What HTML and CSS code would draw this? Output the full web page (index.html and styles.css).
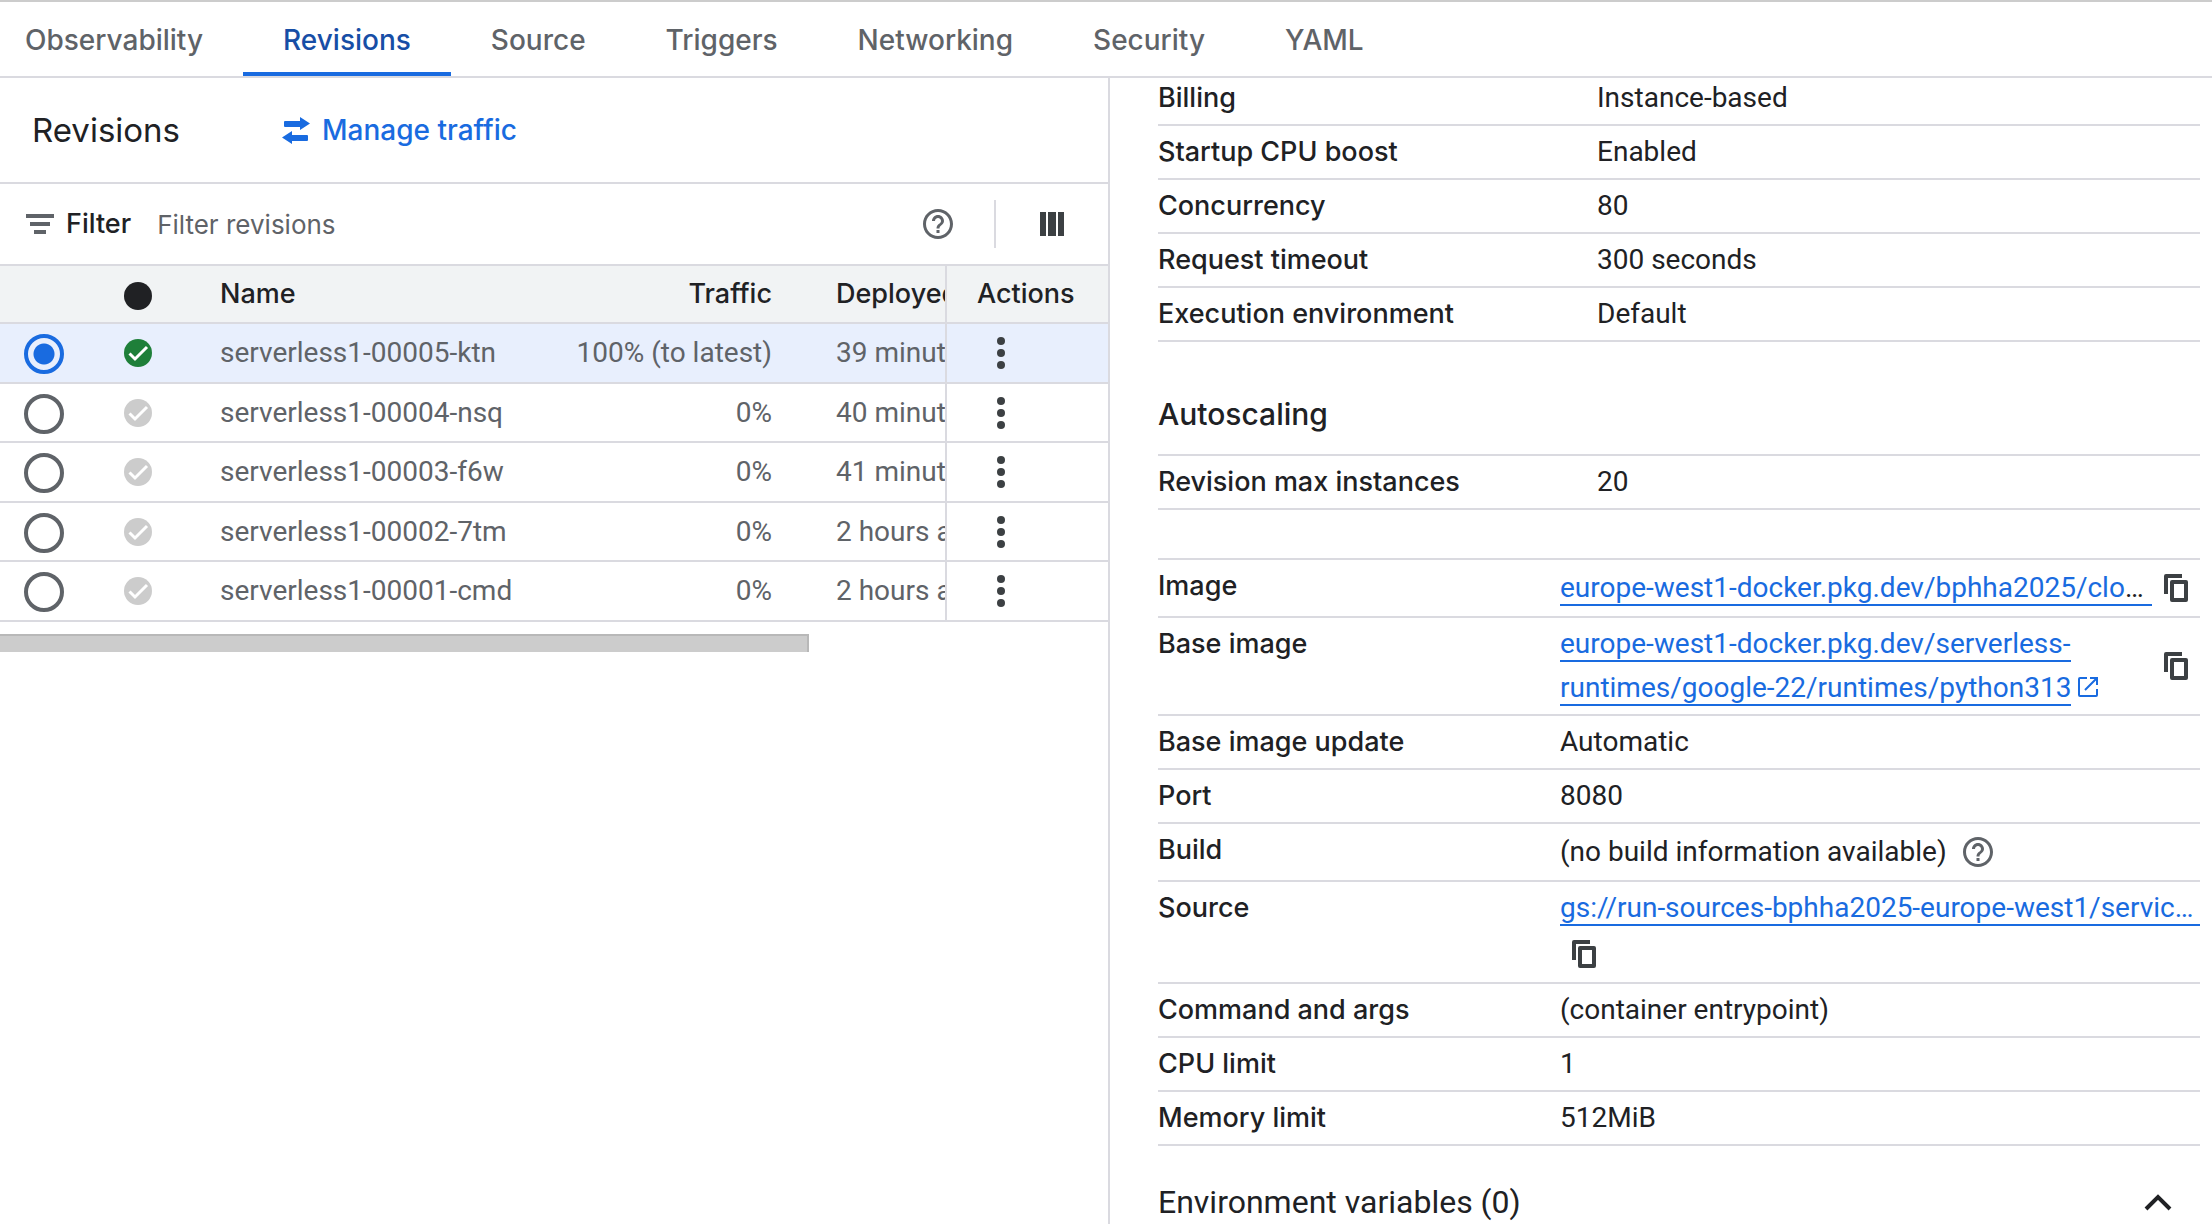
FILE: index.html
```
<!DOCTYPE html>
<html lang="en">
<head>
<meta charset="utf-8">
<title>Revisions</title>
<link rel="stylesheet" href="styles.css">
</head>
<body>
<svg class="sprite" aria-hidden="true">
  <symbol id="i-check" viewBox="0 0 28 28"><circle cx="14" cy="14" r="14" fill="currentColor"/><path class="tick" d="M5.5 14.5l5.5 5.5L23 8"/></symbol>
  <symbol id="i-more" viewBox="0 0 8 32"><circle cx="4" cy="4" r="4"/><circle cx="4" cy="16" r="4"/><circle cx="4" cy="28" r="4"/></symbol>
  <symbol id="i-help" viewBox="2 2 20 20"><path d="M11 18h2v-2h-2v2zm1-16C6.48 2 2 6.48 2 12s4.48 10 10 10 10-4.480 10-10S17.520 2 12 2zm0 18c-4.410 0-8-3.590-8-8s3.590-8 8-8 8 3.590 8 8-3.590 8-8 8zm0-14c-2.210 0-4 1.790-4 4h2c0-1.100.9-2 2-2s2 .9 2 2c0 2-3 1.750-3 5h2c0-2.250 3-2.500 3-5 0-2.210-1.790-4-4-4z"/></symbol>
  <symbol id="i-copy" viewBox="0 0 24 28"><path d="M2 0h16v4H4v16H0V2a2 2 0 0 1 2-2z"/><path fill-rule="evenodd" d="M8 6h14a2 2 0 0 1 2 2v18a2 2 0 0 1-2 2H8a2 2 0 0 1-2-2V8a2 2 0 0 1 2-2zm2 4v14h10V10z"/></symbol>
</svg>

<nav class="tabs">
  <a href="#observability">Observability</a>
  <a href="#revisions" class="active" aria-current="page">Revisions</a>
  <a href="#source">Source</a>
  <a href="#triggers">Triggers</a>
  <a href="#networking">Networking</a>
  <a href="#security">Security</a>
  <a href="#yaml">YAML</a>
</nav>

<main class="split">
  <section class="list">
    <header class="list-head">
      <h1>Revisions</h1>
      <button type="button" class="manage">
        <svg width="28" height="27" viewBox="0 0 28 27"><path d="M3 4h15V0l10 6.500L18 13v-3H3a1 1 0 0 1-1-1V5a1 1 0 0 1 1-1zM25 24H10v3L0 20.500 10 14v4h15a1 1 0 0 1 1 1v4a1 1 0 0 1-1 1z" fill="currentColor"/></svg>
        Manage traffic
      </button>
    </header>
    <div class="filter">
      <svg width="28" height="20" viewBox="0 0 28 20"><path d="M0 0h28v4H0zM4 8h20v4H4zM8 16h12v4H8z"/></svg>
      <label for="filter">Filter</label>
      <input id="filter" type="text" placeholder="Filter revisions">
      <button type="button" class="icon help" aria-label="Help"><svg width="30" height="30"><use href="#i-help"/></svg></button>
      <button type="button" class="icon columns" aria-label="Column display options"><svg width="24" height="24" viewBox="0 0 24 24"><path d="M0 0h6v24H0zM8 0h8v24H8zM18 0h6v24h-6z"/></svg></button>
    </div>
    <table class="revisions">
      <colgroup><col class="c-radio"><col class="c-status"><col class="c-name"><col class="c-traffic"><col><col class="c-actions"></colgroup>
      <thead>
        <tr><th></th><th><span class="dot"></span></th><th>Name</th><th class="num">Traffic</th><th class="deployed">Deployed</th><th class="actions">Actions</th></tr>
      </thead>
      <tbody>
        <tr class="selected">
          <td><input type="radio" name="rev" aria-label="serverless1-00005-ktn" checked></td>
          <td><svg class="ok" width="28" height="28"><use href="#i-check"/></svg></td>
          <td>serverless1-00005-ktn</td><td class="num">100% (to latest)</td><td class="deployed">39 minutes ago</td>
          <td class="actions"><button type="button" class="icon more" aria-label="Actions"><svg width="8" height="32"><use href="#i-more"/></svg></button></td>
        </tr>
        <tr>
          <td><input type="radio" name="rev" aria-label="serverless1-00004-nsq"></td>
          <td><svg class="idle" width="28" height="28"><use href="#i-check"/></svg></td>
          <td>serverless1-00004-nsq</td><td class="num">0%</td><td class="deployed">40 minutes ago</td>
          <td class="actions"><button type="button" class="icon more" aria-label="Actions"><svg width="8" height="32"><use href="#i-more"/></svg></button></td>
        </tr>
        <tr>
          <td><input type="radio" name="rev" aria-label="serverless1-00003-f6w"></td>
          <td><svg class="idle" width="28" height="28"><use href="#i-check"/></svg></td>
          <td>serverless1-00003-f6w</td><td class="num">0%</td><td class="deployed">41 minutes ago</td>
          <td class="actions"><button type="button" class="icon more" aria-label="Actions"><svg width="8" height="32"><use href="#i-more"/></svg></button></td>
        </tr>
        <tr>
          <td><input type="radio" name="rev" aria-label="serverless1-00002-7tm"></td>
          <td><svg class="idle" width="28" height="28"><use href="#i-check"/></svg></td>
          <td>serverless1-00002-7tm</td><td class="num">0%</td><td class="deployed">2 hours ago</td>
          <td class="actions"><button type="button" class="icon more" aria-label="Actions"><svg width="8" height="32"><use href="#i-more"/></svg></button></td>
        </tr>
        <tr>
          <td><input type="radio" name="rev" aria-label="serverless1-00001-cmd"></td>
          <td><svg class="idle" width="28" height="28"><use href="#i-check"/></svg></td>
          <td>serverless1-00001-cmd</td><td class="num">0%</td><td class="deployed">2 hours ago</td>
          <td class="actions"><button type="button" class="icon more" aria-label="Actions"><svg width="8" height="32"><use href="#i-more"/></svg></button></td>
        </tr>
      </tbody>
    </table>
    <div class="scroll-thumb"></div>
  </section>

  <section class="details">
    <dl class="props general">
      <div><dt>Billing</dt><dd>Instance-based</dd></div>
      <div><dt>Startup CPU boost</dt><dd>Enabled</dd></div>
      <div><dt>Concurrency</dt><dd>80</dd></div>
      <div><dt>Request timeout</dt><dd>300 seconds</dd></div>
      <div><dt>Execution environment</dt><dd>Default</dd></div>
    </dl>
    <h2>Autoscaling</h2>
    <dl class="props ruled">
      <div><dt>Revision max instances</dt><dd>20</dd></div>
    </dl>
    <dl class="props ruled container">
      <div><dt>Image</dt><dd class="with-icon"><span class="clip"><a href="#image">europe-west1-docker.pkg.dev/bphha2025/cloud-run-source-deploy/serverless1</a></span><button type="button" class="icon" aria-label="Copy"><svg width="24" height="28"><use href="#i-copy"/></svg></button></dd></div>
      <div><dt>Base image</dt><dd class="with-icon"><span class="grow"><a href="#base">europe-west1-docker.pkg.dev/serverless-<wbr>runtimes/google-22/runtimes/python313</a><svg class="ext" width="20" height="20" viewBox="0 0 20 20"><path d="M9 1H2a1 1 0 0 0-1 1v16a1 1 0 0 0 1 1h16a1 1 0 0 0 1-1v-6M12 1h7v7M18.500 1.500L7 13"/></svg></span><button type="button" class="icon" aria-label="Copy"><svg width="24" height="28"><use href="#i-copy"/></svg></button></dd></div>
      <div><dt>Base image update</dt><dd>Automatic</dd></div>
      <div><dt>Port</dt><dd>8080</dd></div>
      <div><dt>Build</dt><dd class="with-icon build">(no build information available)<button type="button" class="icon help" aria-label="Help"><svg width="30" height="30"><use href="#i-help"/></svg></button></dd></div>
      <div><dt>Source</dt><dd><span class="clip blue"><a href="#gs">gs://run-sources-bphha2025-europe-west1/services/serverless1/source.zip</a></span><button type="button" class="icon" aria-label="Copy"><svg width="24" height="28"><use href="#i-copy"/></svg></button></dd></div>
      <div><dt>Command and args</dt><dd>(container entrypoint)</dd></div>
      <div><dt>CPU limit</dt><dd>1</dd></div>
      <div><dt>Memory limit</dt><dd>512MiB</dd></div>
    </dl>
    <button type="button" class="expander" aria-expanded="true">
      Environment variables (0)
      <svg width="28" height="18" viewBox="0 0 28 18"><path d="M2 16L14 4l12 12"/></svg>
    </button>
  </section>
</main>
</body>
</html>
```
FILE: styles.css
```
:root {
  --sans: Inter, "Open Sans", sans-serif;
  --body: Roboto, "Noto Sans", sans-serif;
  --ink: #202124;
  --muted: #5f6368;
  --icon: #3c4043;
  --blue: #196be0;
  --rule: #dadae0;
}

* { box-sizing: border-box; }

body {
  margin: 0;
  height: 100vh;
  display: flex;
  flex-direction: column;
  overflow: hidden;
  border-top: 2px solid #ccc;
  background: #fff;
  color: var(--ink);
  font: 28px/44px var(--body);
}

.sprite { position: absolute; width: 0; height: 0; }
.tick { fill: none; stroke: #fff; stroke-width: 3; }

button {
  border: 0;
  padding: 0;
  background: none;
  color: inherit;
  font: inherit;
}

.icon {
  flex: none;
  display: flex;
  align-items: center;
  justify-content: center;
  width: 48px;
  height: 48px;
  fill: var(--icon);
}
.icon.help { fill: var(--muted); }

/* Tabs */
.tabs {
  flex: none;
  display: flex;
  height: 76px;
  border-bottom: 2px solid var(--rule);
  font: 500 28px/76px var(--sans);
}
.tabs a {
  height: 74px;
  padding: 0 40px;
  color: var(--muted);
  text-decoration: none;
}
.tabs a:first-child { padding-left: 25px; }
.tabs .active {
  color: #174ea6;
  box-shadow: inset 0 -4px var(--blue);
}

.split {
  flex: 1;
  min-height: 0;
  display: grid;
  grid-template-columns: 1110fr 1102fr;
}

/* Revision list */
.list {
  min-width: 0;
  border-right: 2px solid var(--rule);
}
.list-head {
  display: flex;
  align-items: center;
  gap: 102px;
  height: 106px;
  padding-left: 32px;
  border-bottom: 2px solid var(--rule);
}
.list-head h1 {
  margin: 0;
  font: 400 33px/44px var(--sans);
}
.manage {
  display: flex;
  align-items: center;
  gap: 12px;
  color: var(--blue);
  font: 500 28px/44px var(--sans);
}

.filter {
  display: flex;
  align-items: center;
  height: 82px;
  padding-left: 26px;
  border-bottom: 2px solid var(--rule);
  font: 500 27px/44px var(--sans);
}
.filter > svg { fill: var(--muted); }
.filter label { margin: 0 26px 0 12px; }
.filter input {
  flex: 1;
  min-width: 0;
  height: 48px;
  padding: 0;
  border: 0;
  outline: 0;
  background: none;
  font: 400 26px/44px var(--sans);
}
.filter input::placeholder { color: var(--muted); opacity: 1; }
.filter .columns {
  width: 114px;
  margin-left: 32px;
  border-left: 2px solid var(--rule);
}

.revisions {
  width: 100%;
  table-layout: fixed;
  border-collapse: separate;
  border-spacing: 0;
  color: var(--muted);
}
.c-radio { width: 88px; }
.c-status { width: 132px; }
.c-name { width: 300px; }
.c-traffic { width: 284px; }
.c-actions { width: 163px; }
.revisions th,
.revisions td {
  height: 60px;
  padding: 0;
  border-bottom: 2px solid var(--rule);
  text-align: left;
  white-space: nowrap;
}
.revisions tbody tr:nth-child(even) td { height: 59px; }
.revisions th {
  height: 58px;
  background: #f1f3f4;
  color: var(--ink);
  font: 500 27px/44px var(--sans);
}
.revisions .num {
  text-align: right;
  padding-right: 32px;
}
.revisions .deployed {
  padding-left: 32px;
  overflow: hidden;
}
.revisions .actions { border-left: 2px solid var(--rule); }
.revisions th.actions { padding-left: 30px; }
.revisions .more { margin-left: 30px; }
.revisions .selected td { background: #e8effd; }
.revisions svg {
  display: block;
}
.ok, .idle, .dot { margin-left: 36px; }
.ok { color: #1e7f39; }
.idle { color: #ccc; }
.dot {
  display: block;
  width: 28px;
  height: 28px;
  margin-top: 4px;
  border-radius: 50%;
  background: var(--ink);
}

.revisions input {
  appearance: none;
  display: block;
  width: 40px;
  height: 40px;
  margin: 2px 0 0 24px;
  border: 4px solid var(--muted);
  border-radius: 50%;
}
.revisions input:checked {
  border-color: var(--blue);
  background: radial-gradient(circle, var(--blue) 10px, transparent 11px);
}

.scroll-thumb {
  width: 73%;
  height: 18px;
  margin-top: 12px;
  border: solid #b8b8b8;
  border-width: 2px 2px 0 0;
  background: #ccc;
}

/* Revision details */
.details {
  min-width: 0;
  overflow: hidden;
  padding: 0 12px 0 48px;
}
.props { margin: 0; }
.props > div {
  display: flex;
  padding: 4px 0;
  border-bottom: 2px solid var(--rule);
}
.props dt {
  flex: none;
  width: 439px;
  font: 500 27px/44px var(--sans);
}
.props dd {
  flex: 1;
  min-width: 0;
  margin: 0;
}
.props.general { margin-top: -6px; }
.props.ruled { border-top: 2px solid var(--rule); }
.props.container { margin-top: 48px; }
.props.container dt { width: 402px; }

.details h2 {
  margin: 50px 0 18px;
  font: 500 30px/44px var(--sans);
}

.with-icon {
  display: flex;
  align-items: center;
}
.props a {
  color: var(--blue);
  text-decoration: none;
  border-bottom: 2px solid var(--blue);
}
.clip {
  display: block;
  flex: 1;
  min-width: 0;
  overflow: hidden;
  text-overflow: ellipsis;
  white-space: nowrap;
}
.clip.blue { color: var(--blue); }
.grow { flex: 1; }
.ext {
  margin-left: 7px;
  fill: none;
  stroke: var(--blue);
  stroke-width: 2;
}
.build { gap: 7px; }

.expander {
  display: flex;
  align-items: center;
  justify-content: space-between;
  width: 100%;
  padding: 34px 28px 0 0;
  font-size: 32px;
}
.expander svg {
  fill: none;
  stroke: var(--ink);
  stroke-width: 4;
}
```
